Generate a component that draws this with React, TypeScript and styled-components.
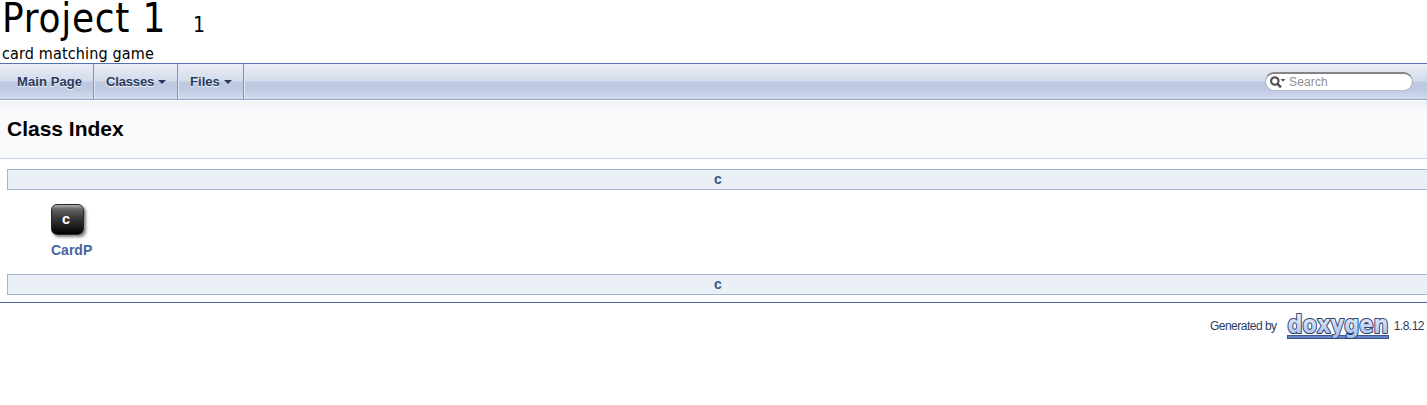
import React from "react";
import styled, { createGlobalStyle } from "styled-components";

const GlobalStyle = createGlobalStyle`
  * { box-sizing: border-box; }
  body {
    margin: 0;
    background: #fff;
    color: #000;
    font-family: "Liberation Sans", Arial, sans-serif;
    overflow: hidden;
  }
`;

const Page = styled.div`
  display: flex;
  flex-direction: column;
`;

const Masthead = styled.header`
  height: 63px;
  padding: 0 2px;
  font-family: Tahoma, "DejaVu Sans Condensed", "DejaVu Sans", sans-serif;
  font-stretch: condensed;
  white-space: nowrap;
`;

const ProjectName = styled.div`
  display: flex;
  align-items: baseline;
  height: 44px;
  line-height: 36px;
  font-size: 40px;
  letter-spacing: 0.75px;
`;

const ProjectNumber = styled.span`
  margin-left: 27px;
  font-size: 21px;
  letter-spacing: 0;
`;

const ProjectBrief = styled.div`
  font-size: 16px;
  line-height: 20px;
  letter-spacing: 0.15px;
`;

const NavBar = styled.nav`
  display: flex;
  justify-content: space-between;
  height: 37px;
  padding: 0 14px 0 5px;
  border-top: 1px solid #5373b4;
  border-bottom: 1px solid #8fa4cd;
  background: linear-gradient(#e9edf5 0, #d3dbeb 17px, #bdc9e0 18px, #bfcae3 26px, #d4dbed 35px);
`;

const Tabs = styled.div`
  display: flex;
`;

const Tab = styled.a<{ $width: number; $spacing?: number }>`
  display: flex;
  align-items: center;
  gap: 4px;
  width: ${({ $width }) => $width}px;
  height: 35px;
  padding-left: 12px;
  border-right: 1px solid #8094bd;
  box-shadow: 1px 0 #dfe5f1;
  color: #283a5d;
  font-size: 13px;
  font-weight: bold;
  letter-spacing: ${({ $spacing = 0 }) => $spacing}px;
  text-shadow: 0 1px 1px rgba(255, 255, 255, 0.9);
  white-space: nowrap;
`;

const Caret = styled.span`
  border: 4px solid transparent;
  border-top-color: #283a5d;
  border-bottom: 0;
`;

const SearchBox = styled.div`
  display: flex;
  align-items: center;
  width: 148px;
  height: 19px;
  margin-top: 8px;
  padding-left: 4px;
  border: 1px solid #a9b1c2;
  border-top: 2px solid #858387;
  border-bottom-color: #b5bccb;
  border-radius: 10px;
  background: #fff;
  color: #909090;
  font-size: 12px;
  line-height: 16px;
  letter-spacing: 0.15px;
`;

const SearchIcon = styled.svg`
  width: 16px;
  height: 13px;
  margin-right: 3px;
`;

const PageHeader = styled.div`
  display: flex;
  align-items: center;
  height: 58px;
  margin-top: 1px;
  padding: 0 7px 2px;
  border-bottom: 1px solid #c4cfe5;
  background: linear-gradient(#eff1f8, #f9fafc 10px);
`;

const Title = styled.h1`
  margin: 0;
  font-size: 21px;
  line-height: 24px;
`;

const Contents = styled.main`
  padding: 10px 0 7px 7px;
`;

const IndexBar = styled.div`
  width: 1422px;
  height: 21px;
  border: 1px solid #a3b4d7;
  background: #ebeff6;
  color: #3d578c;
  font-size: 14px;
  font-weight: bold;
  line-height: 19px;
  text-align: center;
`;

const Entry = styled.section`
  height: 84px;
  padding: 14px 0 0 44px;
`;

const LetterBadge = styled.div`
  width: 33px;
  height: 31px;
  padding-right: 3px;
  border: 1px solid #272727;
  border-radius: 6px;
  background: linear-gradient(#b0b0b0 0, #666 4px, #3d3d3d 12px, #000 100%);
  box-shadow: 2px 2px 3px rgba(0, 0, 0, 0.5);
  color: #fff;
  font-size: 14.5px;
  font-weight: bold;
  line-height: 28px;
  text-align: center;
`;

const ClassLink = styled.a`
  display: block;
  margin-top: 7px;
  color: #4665a2;
  font-size: 14px;
  font-weight: bold;
  line-height: 17px;
`;

const Footer = styled.footer`
  display: flex;
  justify-content: flex-end;
  height: 48px;
  padding: 10px 3px 0 0;
  border-top: 1px solid #4a6aaa;
  color: #2a3d61;
  font-size: 12px;
  line-height: 26px;
  letter-spacing: -0.5px;
  white-space: nowrap;
`;

const Logo = styled.svg`
  width: 104px;
  height: 28px;
  margin: 0 4px 0 9px;
  overflow: visible;
`;

export default function App() {
  return (
    <Page>
      <GlobalStyle />
      <Masthead>
        <ProjectName>
          Project 1<ProjectNumber>1</ProjectNumber>
        </ProjectName>
        <ProjectBrief>card matching game</ProjectBrief>
      </Masthead>
      <NavBar>
        <Tabs>
          <Tab $width={89} $spacing={0.1}>Main Page</Tab>
          <Tab $width={84} $spacing={-0.15}>Classes<Caret /></Tab>
          <Tab $width={66} $spacing={0.05}>Files<Caret /></Tab>
        </Tabs>
        <SearchBox>
          <SearchIcon viewBox="0 0 16 13">
            <circle cx="4.8" cy="5" r="3.7" fill="none" stroke="#555" strokeWidth="2.2" />
            <path d="M7.5 7.8L11 11.3" stroke="#555" strokeWidth="2.6" />
            <path d="M10.5 3h5l-2.5 2.7z" fill="#555" />
          </SearchIcon>
          Search
        </SearchBox>
      </NavBar>
      <PageHeader>
        <Title>Class Index</Title>
      </PageHeader>
      <Contents>
        <IndexBar>c</IndexBar>
        <Entry>
          <LetterBadge>c</LetterBadge>
          <ClassLink>CardP</ClassLink>
        </Entry>
        <IndexBar>c</IndexBar>
      </Contents>
      <Footer>
        Generated by
        <Logo viewBox="0 0 104 28">
          <defs>
            <linearGradient id="logoFill" x1="0" y1="0" x2="0" y2="1">
              <stop offset="0" stopColor="#f3f7ff" />
              <stop offset="1" stopColor="#a0b8ea" />
            </linearGradient>
          </defs>
          <rect x="1.5" y="22.5" width="101" height="3" fill="#6484c4" stroke="#3a5590" />
          <text
            x="1.5"
            y="20"
            textLength="101"
            lengthAdjust="spacingAndGlyphs"
            fontFamily="DejaVu Sans, sans-serif"
            fontSize="24"
            fontWeight="bold"
            letterSpacing="0"
            fill="url(#logoFill)"
            stroke="#2f466f"
            strokeWidth="2.2"
            strokeLinejoin="round"
            paintOrder="stroke"
          >
            doxygen
          </text>
        </Logo>
        1.8.12
      </Footer>
    </Page>
  );
}
